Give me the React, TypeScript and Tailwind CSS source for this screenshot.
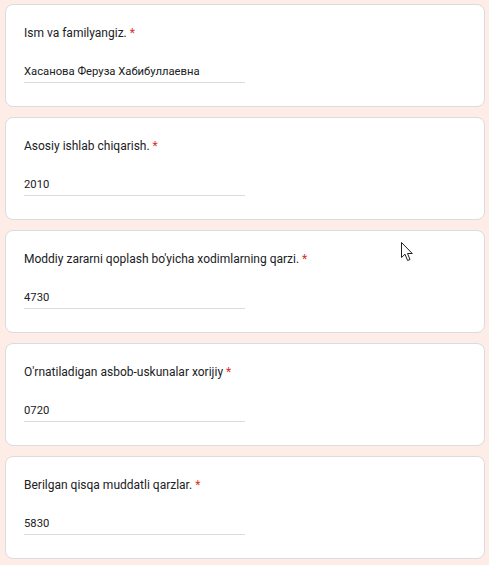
import React from "react";

const items = [
  { label: "Ism va familyangiz.", value: "Хасанова Феруза Хабибуллаевна" },
  { label: "Asosiy ishlab chiqarish.", value: "2010" },
  { label: "Moddiy zararni qoplash bo'yicha xodimlarning qarzi.", value: "4730" },
  { label: "O'rnatiladigan asbob-uskunalar xorijiy", value: "0720" },
  { label: "Berilgan qisqa muddatli qarzlar.", value: "5830" },
];

export default function App() {
  return (
    <div className="relative w-[489px] h-[565px] overflow-hidden bg-[#fdede6] pt-[4px] px-[5px] flex flex-col gap-[10px]" style={{ fontFamily: "Roboto, 'Noto Sans', sans-serif" }}>
      {items.map((it, i) => (
        <div key={i} className="h-[103px] w-[480px] shrink-0 rounded-[8px] border border-[#dadce0] bg-white pl-[18px] pt-[18px]">
          <div className="text-[12px] leading-[20px] text-[#202124]">
            {it.label} <span className="text-[#d93025]">*</span>
          </div>
          <div className="mt-[21px] w-[221px] border-b border-[#dadce0] pb-[2px] text-[11.25px] leading-[16px] text-[#202124]">
            {it.value}
          </div>
        </div>
      ))}
      <svg className="absolute left-[401px] top-[242px]" width="14" height="21" viewBox="0 0 14 21">
        <path d="M0.5 0.5 L0.5 15.5 L4 12.2 L6.6 18.5 L9 17.5 L6.5 11.5 L11.3 11.5 Z" fill="white" stroke="#222" strokeWidth="1" strokeLinejoin="round" />
      </svg>
    </div>
  );
}
